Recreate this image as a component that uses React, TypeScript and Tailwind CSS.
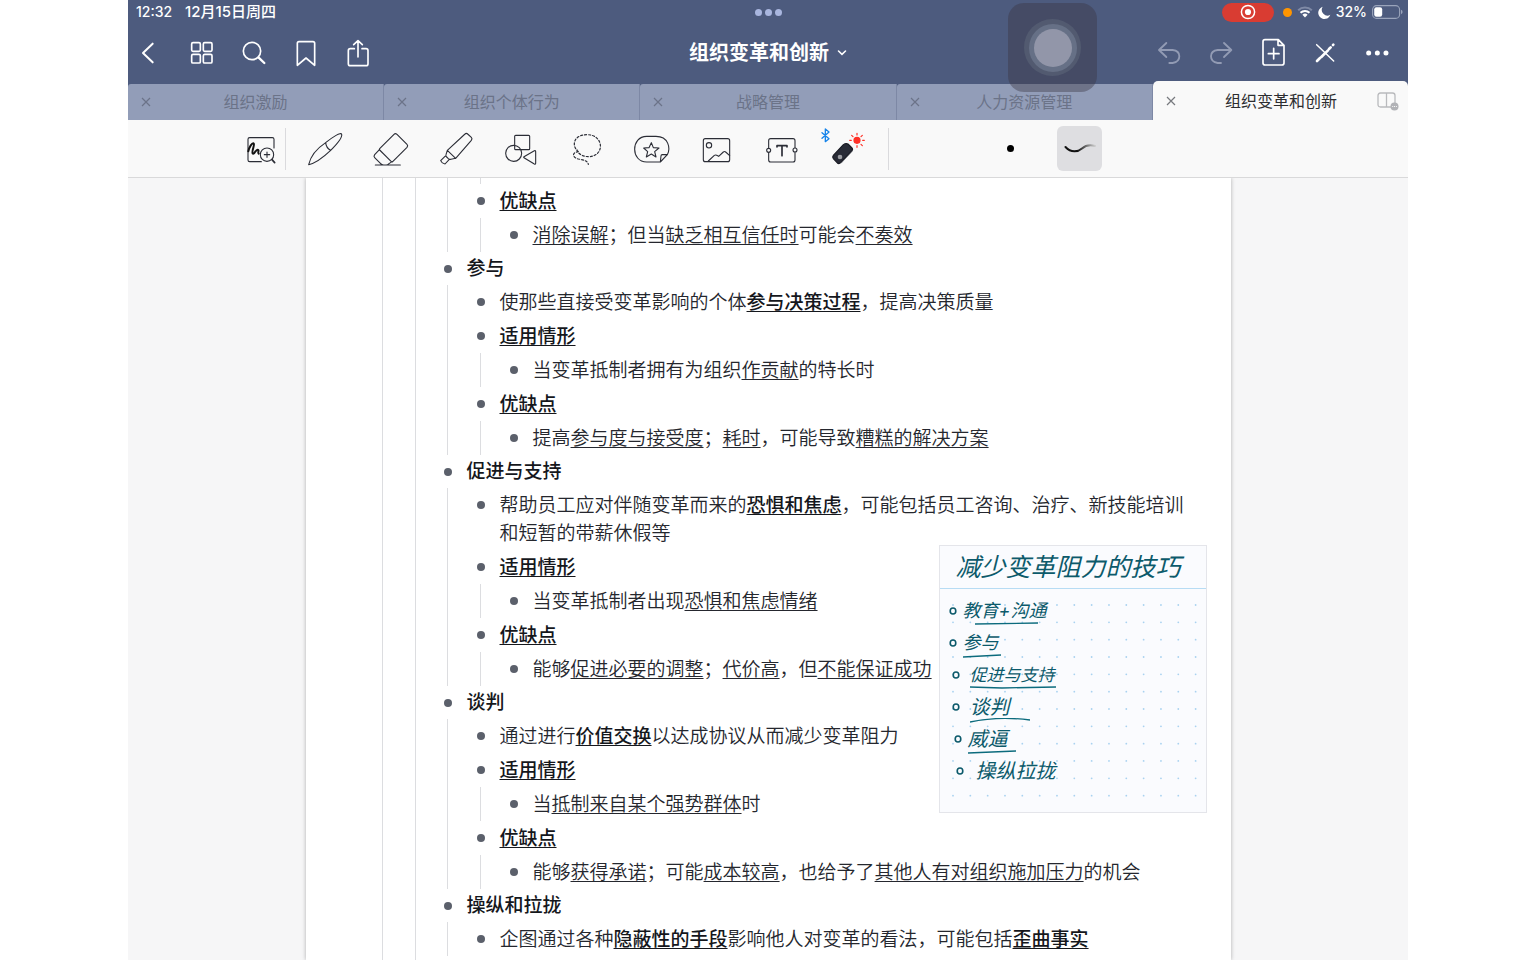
import React from 'react';

type Part = string | { t: string; b?: boolean };
type Item = { parts: Part[]; bold?: boolean; children?: Item[] };

const u = (t: string): Part => ({ t });
const bu = (t: string): Part => ({ t, b: true });
const head = (t: string, ...children: Item[]): Item => ({ parts: [u(t)], bold: true, children });
const line = (...parts: Part[]): Item => ({ parts });

const sections: { title: string; items: Item[] }[] = [
  {
    title: '参与',
    items: [
      line('使那些直接受变革影响的个体', bu('参与决策过程'), '，提高决策质量'),
      head('适用情形', line('当变革抵制者拥有为组织', u('作贡献'), '的特长时')),
      head('优缺点', line('提高', u('参与度与接受度'), '；', u('耗时'), '，可能导致', u('糟糕的解决方案'))),
    ],
  },
  {
    title: '促进与支持',
    items: [
      line('帮助员工应对伴随变革而来的', bu('恐惧和焦虑'), '，可能包括员工咨询、治疗、新技能培训', '和短暂的带薪休假等'),
      head('适用情形', line('当变革抵制者出现', u('恐惧和焦虑情绪'))),
      head('优缺点', line('能够', u('促进必要的调整'), '；', u('代价高'), '，但', u('不能保证成功'))),
    ],
  },
  {
    title: '谈判',
    items: [
      line('通过进行', bu('价值交换'), '以达成协议从而减少变革阻力'),
      head('适用情形', line('当', u('抵制来自某个强势群体'), '时')),
      head('优缺点', line('能够', u('获得承诺'), '；可能', u('成本较高'), '，也给予了', u('其他人有对组织施加压力'), '的机会')),
    ],
  },
  {
    title: '操纵和拉拢',
    items: [line('企图通过各种', bu('隐蔽性的手段'), '影响他人对变革的看法，可能包括', bu('歪曲事实'))],
  },
];

const firstItems: Item[] = [
  head('优缺点', line(u('消除误解'), '；但当', u('缺乏相互信任时'), '可能会', u('不奏效'))),
];

function Bullet() {
  return (
    <span className="flex h-[26px] w-2 shrink-0 items-center">
      <span className="size-2 rounded-full bg-[#5b606b]" />
    </span>
  );
}

function OutlineItem({ item }: { item: Item }) {
  return (
    <li>
      <div className="flex gap-[15px] pt-1 pb-0.5">
        <Bullet />
        <p className={item.bold ? 'font-medium text-[#15171c]' : ''}>
          {item.parts.map((p, i) =>
            typeof p === 'string' ? (
              <span key={i}>{p}</span>
            ) : (
              <u key={i} className={p.b ? 'font-medium text-[#15171c] decoration-1 underline-offset-2' : 'decoration-1 underline-offset-2'}>
                {p.t}
              </u>
            ),
          )}
        </p>
      </div>
      {item.children && <OutlineList items={item.children} />}
    </li>
  );
}

function OutlineList({ items }: { items: Item[] }) {
  return (
    <ul className="ml-[3px] border-l border-[#dcdde0] pl-[29px]">
      {items.map((it, i) => (
        <OutlineItem key={i} item={it} />
      ))}
    </ul>
  );
}

function Icon({ box, size = 'size-[36px]', children }: { box: string; size?: string; children: React.ReactNode }) {
  return (
    <svg viewBox={box} className={`${size} shrink-0 overflow-visible`} fill="none" stroke="currentColor" strokeWidth="3.3" strokeLinecap="round" strokeLinejoin="round" aria-hidden="true">
      {children}
    </svg>
  );
}

const nav = 'flex h-full w-[52px] items-center justify-center';

function StatusBar() {
  return (
    <div className="grid h-6 grid-cols-[1fr_auto_1fr] items-center text-[14px] font-medium leading-6">
      <div className="flex gap-[13px] pl-2">
        <span>12:32</span>
        <span className="text-[15px]">12月15日周四</span>
      </div>
      <div className="flex gap-[3px]">
        <span className="size-[7px] rounded-full bg-[#a9b6df]" />
        <span className="size-[7px] rounded-full bg-[#a9b6df]" />
        <span className="size-[7px] rounded-full bg-[#a9b6df]" />
      </div>
      <div className="flex items-center justify-end gap-[5px] pr-[5px]">
        <span className="mr-1 flex h-[19px] w-[52px] items-center justify-center rounded-full bg-[#d93c32]">
          <svg viewBox="0 0 16 16" className="size-4" aria-hidden="true">
            <circle cx="8" cy="8" r="6.6" fill="none" stroke="white" strokeWidth="1.5" />
            <circle cx="8" cy="8" r="3.1" fill="white" />
          </svg>
        </span>
        <span className="size-[9px] rounded-full bg-[#ff9500]" />
        <svg viewBox="0 0 16 12" className="h-3 w-4" fill="none" aria-hidden="true">
          <path d="M1.2 4.3a9.8 9.8 0 0 1 13.6 0" stroke="#7f8aa6" strokeWidth="2" />
          <path d="M3.5 6.8a6.5 6.5 0 0 1 9 0" stroke="white" strokeWidth="2" />
          <path d="M5.4 8.8a3.8 3.8 0 0 1 5.2 0L8 11.5z" fill="white" />
        </svg>
        <svg viewBox="0 0 13 13" className="size-[13px]" fill="white" aria-hidden="true">
          <path d="M4.7.8A6.2 6.2 0 1 0 12.3 8.8 5.7 5.7 0 0 1 4.700.8z" />
        </svg>
        <span>32%</span>
        <svg viewBox="0 0 31 14" className="h-[14px] w-[31px]" aria-hidden="true">
          <rect x=".6" y=".6" width="27" height="12.8" rx="4" fill="none" stroke="#9aa4bb" strokeWidth="1.1" />
          <rect x="2.2" y="2.2" width="8" height="9.6" rx="2.2" fill="white" />
          <path d="M29 4.8v4.4q1.6-.6 1.6-2.2T29 4.8z" fill="#9aa4bb" />
        </svg>
      </div>
    </div>
  );
}

function NavBar() {
  return (
    <div className="grid h-[57px] grid-cols-[1fr_auto_1fr] items-center">
      <div className="flex h-full">
        <button aria-label="返回" className="mr-2 flex h-full w-10 items-center justify-center">
          <Icon box="16 112 90 90" size="size-[30px]"><path d="M75 129 46 157l29 28" strokeWidth="6" /></Icon>
        </button>
        <button aria-label="缩略图" className={nav}>
          <Icon box="177 112 90 90" size="size-[30px]">
            <g strokeWidth="5">
              <rect x="191" y="126" width="26" height="26" rx="4" />
              <rect x="226" y="126" width="26" height="26" rx="4" />
              <rect x="191" y="161" width="26" height="26" rx="4" />
              <rect x="226" y="161" width="26" height="26" rx="4" />
            </g>
          </Icon>
        </button>
        <button aria-label="搜索" className={nav}>
          <Icon box="332 112 90 90" size="size-[30px]">
            <circle cx="371" cy="151" r="26" strokeWidth="5" />
            <path d="m391 171 17 16" strokeWidth="7" />
          </Icon>
        </button>
        <button aria-label="书签" className={nav}>
          <Icon box="489 112 90 90" size="size-[30px]"><path d="M508 194v-66q0-5 5-5h42q5 0 5 5v66l-26-22z" strokeWidth="5" /></Icon>
        </button>
        <button aria-label="分享" className={nav}>
          <Icon box="645 112 90 90" size="size-[30px]">
            <path d="M679 144h-12q-6 0-6 6v39q0 6 6 6h47q6 0 6-6v-39q0-6-6-6h-12M690 169v-48M677 132l13-12 13 12" strokeWidth="5" />
          </Icon>
        </button>
      </div>
      <button className="flex items-center gap-2 text-[20px] font-bold leading-7">
        组织变革和创新
        <svg viewBox="0 0 10 10" className="size-[10px]" fill="none" stroke="white" strokeWidth="1.6" strokeLinecap="round" aria-hidden="true"><path d="m1.5 3 3.5 3.4L8.5 3" /></svg>
      </button>
      <div className="flex h-full justify-end pr-[5px]">
        <button aria-label="撤销" className={`${nav} text-[#929bb4]`}>
          <Icon box="42 112 90 90" size="size-[30px]"><path d="M79 127 57 148l22 21M58 148h40q20 2 20 19t-20 20H88" strokeWidth="5.5" /></Icon>
        </button>
        <button aria-label="重做" className={`${nav} text-[#929bb4]`}>
          <Icon box="198 112 90 90" size="size-[30px]"><path d="m252 127 22 21-22 21M273 148h-40q-20 2-20 19t20 20h10" strokeWidth="5.5" /></Icon>
        </button>
        <button aria-label="添加页面" className={nav}>
          <Icon box="354 112 90 90" size="size-[30px]">
            <path d="M415 117h-40q-6 0-6 6v64q0 6 6 6h51q6 0 6-6v-53zM414 118v16h17M401 143v32M385 159h32" strokeWidth="5" />
          </Icon>
        </button>
        <button aria-label="只读模式" className={nav}>
          <Icon box="510 112 90 90" size="size-[30px]">
            <path d="M530 132l51 49" strokeWidth="4.5" />
            <path d="m531 181 9-9M544 169l20-20M567 145l5-5M579 133l1-1" strokeWidth="8" />
          </Icon>
        </button>
        <button aria-label="更多" className={nav}>
          <Icon box="667 112 90 90" size="size-[30px]">
            <g fill="currentColor" stroke="none"><circle cx="687" cy="157" r="7.5" /><circle cx="713" cy="157" r="7.5" /><circle cx="739" cy="157" r="7.5" /></g>
          </Icon>
        </button>
      </div>
    </div>
  );
}

function CloseGlyph() {
  return (
    <svg viewBox="0 0 10 10" className="mx-auto size-[10px]" stroke="currentColor" strokeWidth="1.2" aria-hidden="true"><path d="m1 1 8 8M9 1 1 9" /></svg>
  );
}

function Tabs() {
  return (
    <div className="flex h-[39px] items-end text-[16px] leading-6">
      {['组织激励', '组织个体行为', '战略管理', '人力资源管理'].map((t) => (
        <div key={t} className="flex h-9 flex-1 items-center rounded-tl-[3px] border-r border-[#7d88a5] bg-[#929db8] px-3 text-[#6b7388]">
          <button aria-label={`关闭 ${t}`} className="w-3"><CloseGlyph /></button>
          <button className="flex-1 pr-3">{t}</button>
        </div>
      ))}
      <div className="flex h-[39px] flex-1 items-center rounded-t-[5px] bg-[#f9f9f9] px-3 text-[#2c2d30]">
        <button aria-label="关闭 组织变革和创新" className="w-3 text-[#77797e]"><CloseGlyph /></button>
        <button className="flex-1 pl-2">组织变革和创新</button>
        <button aria-label="分屏" className="-mr-1">
          <svg viewBox="0 0 23 20" className="h-5 w-[23px]" fill="none" stroke="#b9babd" strokeWidth="1.3" aria-hidden="true">
            <path d="M14 16H3.5Q1 16 1 13.5v-9Q1 2 3.5 2h12Q18 2 18 4.5V12M9.5 2v14" />
            <circle cx="17.5" cy="15.5" r="4" fill="#b1b2b6" stroke="none" />
            <path d="M15.3 15.5h.9m.9 0h.9m.9 0h.9" stroke="white" strokeWidth="1" />
          </svg>
        </button>
      </div>
    </div>
  );
}

const tool = 'flex h-full w-[65px] shrink-0 items-center justify-center';

function Toolbar() {
  return (
    <div className="flex h-[58px] items-center border-b border-[#d9d9da] bg-[#f9f9f9] pl-[109px] text-[#2b2d36]">
      <button aria-label="缩放窗口" className="flex h-full w-12 items-center justify-center">
        <Icon box="39 32 108 108">
          <path d="M94 124H59q-5 0-5-5V57q0-5 5-5h68q5 0 5 5v26" />
          <path d="M55 93c3-14 11-26 16-24s-7 24-3 30 9-12 15-11-1 9 3 12" stroke="#111" strokeWidth="6" />
          <circle cx="111" cy="103" r="20" /><path d="M111 95v16M103 103h16" /><path d="m126 118 8 9" strokeWidth="5" />
        </Icon>
      </button>
      <span className="mr-1.5 h-[42px] w-px bg-[#dadadd]" />
      <button aria-label="钢笔" className={tool}>
        <Icon box="232 32 108 108"><path d="M237 133c6-27 27-50 51-66 21-17 46-33 48-25 3 11-16 31-33 48-20 19-44 38-66 43zM288 67c1 11 5 18 15 23" /></Icon>
      </button>
      <button aria-label="橡皮擦" className={tool}>
        <Icon box="428 32 108 108"><path d="m494 42-43 43q-2 2 0 4l35 35q2 2 4 0l43-43q4-5 0-9l-30-30q-5-4-9 0zM451 87l-15 16q-4 5 0 9l18 18q3 4 9 4h7q5 0 9-4l9-6M438 134h75" /></Icon>
      </button>
      <button aria-label="荧光笔" className={tool}>
        <Icon box="623 32 108 108"><path d="m707 41-53 49 25 24 47-54q4-5 0-9l-11-10q-4-4-8 0zM654 90l-4 13q-2 4 2 7l5 5q4 3 8 2l14-3M647 108l-13 13q3 8 13 10l13-14" /></Icon>
      </button>
      <button aria-label="形状" className={tool}>
        <Icon box="818 32 108 108"><rect x="856" y="45" width="45" height="43" rx="3" /><circle cx="853" cy="99" r="24" /><path d="m884 109 31-18q4-1 4 3v34q0 5-4 3l-31-19q-2-1 0-3z" /></Icon>
      </button>
      <button aria-label="套索" className={tool}>
        <Icon box="22 32 108 108"><path d="M56 94C34 76 42 43 82 43c52 0 54 66 4 66-17 0-34-10-34-22M56 94c-22 3-16 18 0 22 18 3 28 6 30 16" strokeDasharray="6 6" strokeWidth="3.6" /></Icon>
      </button>
      <button aria-label="贴纸" className={tool}>
        <Icon box="218 32 108 108"><path d="M303 125h-41c-48 0-48-77 0-77h28c38 0 44 36 34 55zM303 125l2-18q0-4 4-4h15" /><path d="m276 67 6 15 17 1-13 11 4 16-14-9-15 9 4-16-12-11 16-1z" /></Icon>
      </button>
      <button aria-label="图片" className={tool}>
        <Icon box="413 32 108 108"><rect x="432" y="55" width="79" height="69" rx="6" /><circle cx="449" cy="75" r="8" /><path d="m447 122 18-17q3-2 7 0l6 3 14-13q4-3 7 0l12 11" /></Icon>
      </button>
      <button aria-label="文本" className={tool}>
        <Icon box="608 32 108 108"><path d="M628 82V61q0-6 6-6h67q6 0 6 6v21M628 97v22q0 6 6 6h67q6 0 6-6V97" /><circle cx="628" cy="90" r="6" /><circle cx="707" cy="89" r="6" /><path d="M653 80v-4h30v4M668 76v30" strokeWidth="5" /></Icon>
      </button>
      <button aria-label="激光笔" className={tool}>
        <Icon box="785 14 144 144" size="size-[48px]">
          <path d="m788 37 21 18-11 9V26l11 9-21 19" stroke="#1684ea" strokeWidth="4" />
          <g stroke="#ff3127" strokeWidth="3.6"><path d="M893 39v5M893 76v5M871 60h5M910 60h5M877 45l4 4M905 72l4 4M909 45l-4 4" /><circle cx="893" cy="60" r="9" fill="#ff3127" /></g>
          <path d="m852 73-30 32q-4 5 0 10l12 13q5 4 10-1l33-35q5-5 1-9l-12-12q-6-4-14 2z" fill="#282b36" stroke="#181a22" />
          <path d="m846 128 32-35" stroke="#50535c" strokeWidth="2" /><circle cx="842" cy="110" r="7" fill="#9b9ca1" stroke="none" />
        </Icon>
      </button>
      <span className="ml-[11px] h-[42px] w-px bg-[#dadadd]" />
      <button aria-label="笔尖粗细" className="ml-[99px] flex size-[45px] items-center justify-center"><span className="size-[7px] rounded-full bg-black" /></button>
      <button aria-label="笔触样式" className="ml-6 flex size-[45px] items-center justify-center rounded-[6px] bg-[#dedee1]">
        <svg viewBox="0 0 32 12" className="h-3 w-8" fill="none" strokeLinecap="round" aria-hidden="true">
          <defs><linearGradient id="fade"><stop offset="0.4" stopColor="#111" /><stop offset="1" stopColor="#ccc" /></linearGradient></defs>
          <path d="M1.5 4C7 10 14 9 18 5.5S26 1.5 31 3" stroke="url(#fade)" strokeWidth="2" />
        </svg>
      </button>
    </div>
  );
}

const noteItems = [
  { t: '教育+沟通', pad: 'gap-[6px] pl-[9px]', size: 'text-[18px]', line: 'M12 2 75 1' },
  { t: '参与', pad: 'gap-[6px] pl-[9px]', size: 'text-[18px]', line: 'M0 3 38 1' },
  { t: '促进与支持', pad: 'gap-[10px] pl-3', size: 'text-[17px]', line: 'M0 1 32 2 86 1' },
  { t: '谈判', pad: 'gap-[10px] pl-3', size: 'text-[20px]', line: 'M0 4Q28-2 60 2' },
  { t: '威逼', pad: 'gap-[6px] pl-[14px]', size: 'text-[20px]', line: 'M0 3 48 1' },
  { t: '操纵拉拢', pad: 'gap-3 pl-4', size: 'text-[20px]', line: '' },
];

function StickyNote() {
  const dots = Array.from({ length: 180 }, (_, i) => [13 + (i % 15) * 17.33, 16 + Math.floor(i / 15) * 17.33]);
  return (
    <aside className="absolute right-6 top-[367px] h-[268px] w-[268px] border border-[#e4e5ea] bg-[#fafbfe] italic text-[#0c5a6b]">
      <h2 className="h-[43px] border-b border-[#b7dcf4] pl-4 text-[25px] leading-[43px]">减少变革阻力的技巧</h2>
      <div className="relative">
        <svg viewBox="0 0 266 222" className="absolute inset-0 h-[222px] w-[266px]" fill="#a9d2f0" aria-hidden="true">
          {dots.map(([x, y], i) => <circle key={i} cx={x} cy={y} r="0.9" />)}
        </svg>
        <ul className="relative pt-[6px] leading-8">
          {noteItems.map((n) => (
            <li key={n.t} className={`flex h-8 items-center ${n.pad} ${n.size}`}>
              <svg viewBox="0 0 8 8" className="size-2 shrink-0" fill="none" stroke="#0c5a6b" strokeWidth="1.6" aria-hidden="true"><ellipse cx="4" cy="4" rx="2.8" ry="3" /></svg>
              <span className="relative">
                {n.t}
                <svg viewBox="0 0 90 5" className="absolute bottom-0 left-0 h-[5px] w-[90px]" fill="none" stroke="#0c6b7d" strokeWidth="1.3" aria-hidden="true"><path d={n.line} /></svg>
              </span>
            </li>
          ))}
        </ul>
      </div>
    </aside>
  );
}

export default function App() {
  return (
    <div className="h-screen overflow-hidden bg-white font-['Inter','Noto_Sans_CJK_SC',sans-serif]">
      <div className="relative mx-auto flex h-full w-10/12 flex-col bg-[#f6f6f7]">
        <header className="bg-[#4d5b7e] text-white">
          <StatusBar />
          <NavBar />
          <Tabs />
        </header>
        <button aria-label="辅助触控" className="absolute right-[311px] top-[3px] flex size-[89px] items-center justify-center rounded-[16px] bg-[#393542]/40">
          <span className="flex size-[57px] items-center justify-center rounded-full bg-[#525a70]">
            <span className="flex size-[48px] items-center justify-center rounded-full bg-[#667086]">
              <span className="size-[38px] rounded-full bg-[#9296a9]" />
            </span>
          </span>
        </button>
        <Toolbar />
        <main className="min-h-0 flex-1 overflow-hidden">
          <article className="relative mx-auto h-full max-w-[925px] bg-white pl-[76px] shadow-[0_0_4px_rgba(0,0,0,0.3)]">
            <div className="h-full border-l border-[#dcdde0] pl-8">
              <div className="h-full border-l border-[#dcdde0] pl-7 pr-[44px] text-[19px] font-[350] leading-7 text-[#25272e]">
                <div className="ml-[3px] border-l border-[#dcdde0] pl-8">
                  <div className="h-[6px] border-l border-[#dcdde0]" />
                </div>
                <OutlineList items={firstItems} />
                {sections.map((s) => (
                  <section key={s.title}>
                    <h3 className="flex h-[33px] items-center gap-[15px] font-medium text-[#15171c]">
                      <Bullet />
                      {s.title}
                    </h3>
                    <OutlineList items={s.items} />
                  </section>
                ))}
              </div>
            </div>
            <StickyNote />
          </article>
        </main>
      </div>
    </div>
  );
}
